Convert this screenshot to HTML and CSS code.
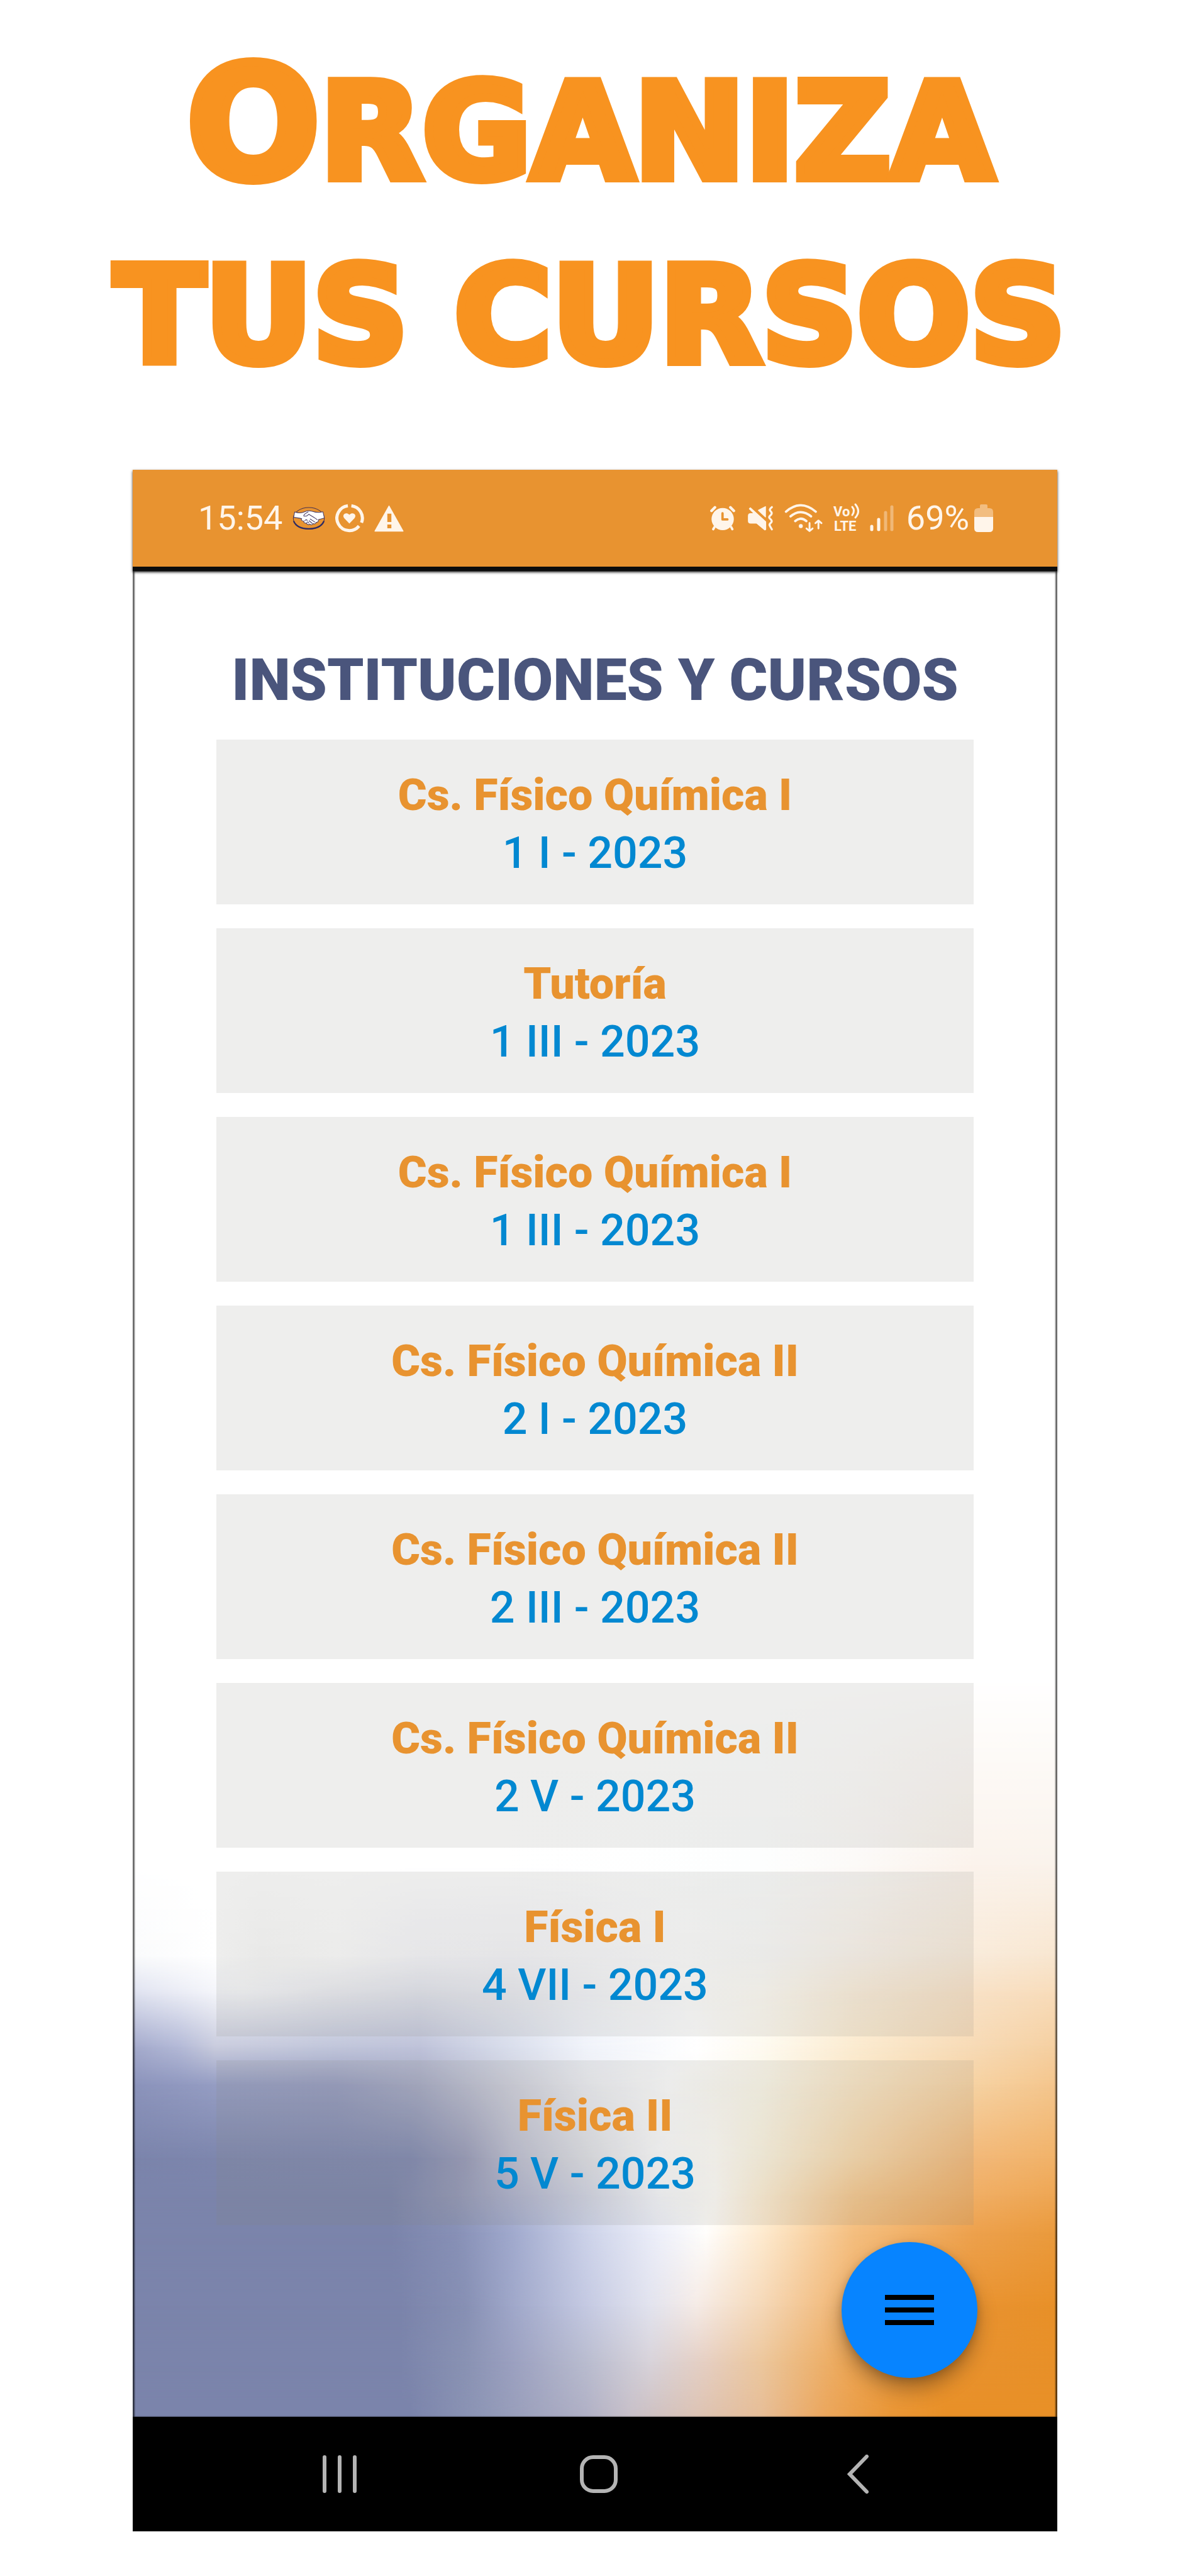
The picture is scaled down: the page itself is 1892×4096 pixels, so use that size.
FILE: index.html
```html
<!DOCTYPE html>
<html lang="es">
<head>
<meta charset="utf-8">
<meta name="viewport" content="width=device-width, initial-scale=1">
<title>Organiza tus cursos</title>
<link rel="stylesheet" href="styles.css">
</head>
<body>
<h1 class="headline">
  <span class="headline-line headline-lead">ORGANIZA</span>
  <span class="headline-line">TUS CURSOS</span>
</h1>

<div class="phone">
  <header class="status">
    <div class="status-group">
      <span class="status-text">15:54</span>
      <svg width="52" height="37" viewBox="46 50 192 138" aria-hidden="true">
        <ellipse cx="142" cy="118" rx="92" ry="64" fill="none" stroke="#4a3350" stroke-width="4"/>
        <path d="M52 134C66 168 104 180 142 180s76-12 90-46" fill="none" stroke="#2d2a63" stroke-width="8"/>
        <path d="M58 80c22 8 42 8 62-2 12-6 30-5 46-1 22 8 40 7 60 2l8 36c-12 4-22 7-34 10 0 12-6 18-14 16-3 9-10 12-18 8-5 9-14 9-20 3-8 6-17 2-20-6-10 2-17-4-16-12-12 0-18-8-12-14-14-4-28-6-48-8z" fill="#fff" stroke="#4a3f68" stroke-width="4" stroke-linejoin="round"/>
        <path d="M112 104c-2-10 14-18 26-24M112 104c12 4 22-2 30-10 16 10 34 18 50 32M150 122l28 18M144 132l18 16M118 132c6-8 14-8 14 0M130 144c4-6 12-6 12 2" fill="none" stroke="#4a3f68" stroke-width="4" stroke-linecap="round"/>
      </svg>
      <svg width="46" height="46" viewBox="294 36 174 172" aria-hidden="true">
        <g fill="none" stroke="#fff5ea" stroke-width="19">
          <path d="M370 47A75 75 0 1 0 437 169"/>
          <path d="M391 47A75 75 0 0 1 452 149"/>
        </g>
        <path d="M379 154l-30-31c-18-22 8-42 30-22 22-20 48 0 30 22z" fill="#fff5ea"/>
      </svg>
      <svg width="47" height="43" viewBox="528 38 176 158" aria-hidden="true">
        <path d="M616 42l84 150H532z" fill="#fff5ea" stroke="#fff5ea" stroke-width="5" stroke-linejoin="round"/>
        <path d="M606 88h24v50h-24zM606 153h24v22h-24z" fill="#e89330"/>
      </svg>
    </div>
    <div class="status-group">
      <svg width="44" height="40" viewBox="25 49 164 148" aria-hidden="true">
        <circle cx="107" cy="128" r="66" fill="#fff5ea"/>
        <g fill="none" stroke="#fff5ea" stroke-linecap="round">
          <path d="M41 79l20-20M153 59l20 20" stroke-width="16"/>
          <path d="M58 176l-7 12M158 176l6 12" stroke-width="14"/>
        </g>
        <path d="M106 94v36h29" fill="none" stroke="#e89330" stroke-width="14" stroke-linecap="round" stroke-linejoin="round"/>
      </svg>
      <svg width="44" height="40" viewBox="254 49 164 148" aria-hidden="true">
        <path d="M366 54v62l-42-40z" fill="#fff5ea" stroke="#fff5ea" stroke-width="5" stroke-linejoin="round"/>
        <path d="M276 63l90 82v44l-4 2-48-40h-36q-12 0-12-12v-30q0-12 12-12h24l-30-30z" fill="#fff5ea" stroke="#fff5ea" stroke-width="8" stroke-linejoin="round"/>
        <path d="M404 57l-9 9q-6 7 0 14l5 6q6 8 0 15l-9 9q-6 7 0 14l9 9q6 7 0 15l-7 7q-6 8 0 15l11 19" fill="none" stroke="#fff5ea" stroke-width="12" stroke-linecap="round"/>
      </svg>
      <svg width="62" height="46" viewBox="482 35 230 172" aria-hidden="true">
        <g fill="none" stroke="#fff5ea" stroke-width="14" stroke-linecap="round" stroke-linejoin="round">
          <path d="M491 82Q535 44 579 44T668 82"/>
          <path d="M518 110q61-50 122 0"/>
          <path d="M546 138q33-28 66 0"/>
          <path d="M631 150v46M613 182l18 15 18-15M684 182v-46M666 150l18-15 18 15" stroke-width="11"/>
        </g>
        <circle cx="579" cy="168" r="12" fill="#fff5ea"/>
      </svg>
      <svg class="volte" width="42" height="54" viewBox="0 0 42 54" aria-hidden="true">
        <text x="0" y="24">Vo</text>
        <text x="1" y="47">LTE</text>
        <path d="M30 9q5 6 0 13M35 5q9 11 0 21" fill="none" stroke="#fff5ea" stroke-width="3" stroke-linecap="round"/>
      </svg>
      <svg width="42" height="42" viewBox="0 0 42 42" aria-hidden="true">
        <g stroke="#fff5ea" stroke-width="5" stroke-linecap="round">
          <path d="M3 34v5M14 23v16"/>
          <path d="M25 12v27M35 3v36" opacity=".38"/>
        </g>
      </svg>
      <div class="battery">
        <span class="status-text">69%</span>
        <svg width="30" height="46" viewBox="0 0 30 46" aria-hidden="true">
          <path d="M9 3q0-2 2-2h8q2 0 2 2v4h3q6 0 6 6v8H0v-8q0-6 6-6h3z" fill="#f2bd80"/>
          <path d="M0 21h30v18q0 6-6 6H6q-6 0-6-6z" fill="#fff5ea"/>
        </svg>
      </div>
    </div>
  </header>

  <main class="screen">
    <div class="backdrop" aria-hidden="true">
      <div class="wash wash-1"></div>
      <div class="wash wash-2"></div>
      <div class="wash wash-3"></div>
      <div class="wash wash-4"></div>
      <div class="wash wash-5"></div>
      <div class="wash wash-6"></div>
      <div class="wash wash-7"></div>
      <div class="wash wash-8"></div>
      <div class="wash wash-9"></div>
      <div class="wash wash-10"></div>
      <div class="wash wash-11"></div>
    </div>
    <h2 class="title">INSTITUCIONES Y CURSOS</h2>
    <ul class="courses">
      <li><a class="course" href="#"><strong class="course-name">Cs. Físico Química I</strong><span class="course-term">1 I - 2023</span></a></li>
      <li><a class="course" href="#"><strong class="course-name">Tutoría</strong><span class="course-term">1 III - 2023</span></a></li>
      <li><a class="course" href="#"><strong class="course-name">Cs. Físico Química I</strong><span class="course-term">1 III - 2023</span></a></li>
      <li><a class="course" href="#"><strong class="course-name">Cs. Físico Química II</strong><span class="course-term">2 I - 2023</span></a></li>
      <li><a class="course" href="#"><strong class="course-name">Cs. Físico Química II</strong><span class="course-term">2 III - 2023</span></a></li>
      <li><a class="course" href="#"><strong class="course-name">Cs. Físico Química II</strong><span class="course-term">2 V - 2023</span></a></li>
      <li><a class="course" href="#"><strong class="course-name">Física I</strong><span class="course-term">4 VII - 2023</span></a></li>
      <li><a class="course" href="#"><strong class="course-name">Física II</strong><span class="course-term">5 V - 2023</span></a></li>
    </ul>
    <button class="fab" type="button" aria-label="Menú">
      <svg width="78" height="48" viewBox="0 0 78 48" aria-hidden="true">
        <path d="M0 0h78v8H0zM0 20h78v8H0zM0 40h78v8H0z"/>
      </svg>
    </button>
  </main>

  <nav class="softkeys" aria-label="Sistema">
    <button class="softkey" type="button" aria-label="Recientes">
      <svg width="56" height="60" viewBox="0 0 56 60" aria-hidden="true"><path d="M4 3v54M28 3v54M52 3v54"/></svg>
    </button>
    <button class="softkey" type="button" aria-label="Inicio">
      <svg width="60" height="60" viewBox="0 0 60 60" aria-hidden="true"><rect x="3" y="3" width="54" height="54" rx="18"/></svg>
    </button>
    <button class="softkey" type="button" aria-label="Atrás">
      <svg width="34" height="62" viewBox="0 0 34 62" aria-hidden="true"><path d="M31 3L4 31l27 28"/></svg>
    </button>
  </nav>
</div>
</body>
</html>
```
FILE: styles.css
```css
* {
  box-sizing: border-box;
}

body {
  margin: 0;
  padding: 64px 0 71px;
  background: #fff;
  font-family: Roboto, "Liberation Sans", sans-serif;
}

.headline {
  margin: 0 0 99px;
  padding-right: 16px;
  color: #f89320;
  font: 700 211px/292px "DejaVu Sans", sans-serif;
  text-align: center;
  -webkit-text-stroke: 14px #f89320;
}

.headline-line {
  display: block;
}

.headline-lead::first-letter {
  font-size: 250px;
  line-height: 1;
}

.phone {
  width: 77.7%;
  margin: 0 auto;
}

/* Status bar */
.status {
  position: relative;
  z-index: 1;
  display: flex;
  align-items: center;
  justify-content: space-between;
  height: 161px;
  padding: 0 102px 0 104px;
  border-bottom: 7px solid #0c0c0c;
  background: #e89330;
  box-shadow: 0 2px 4px rgba(0, 0, 0, .8);
  color: #fff5ea;
}

.status-group {
  display: flex;
  align-items: center;
  gap: 16px;
}

.battery {
  display: flex;
  align-items: center;
  gap: 8px;
}

.status-text {
  font-size: 54px;
  line-height: 64px;
}

.volte {
  overflow: visible;
  fill: #fff5ea;
  font: 700 22px Roboto, sans-serif;
}

/* App screen */
.screen {
  position: relative;
  padding: 119px 9% 305px;
}

.title {
  margin: 0 0 40px;
  color: #4a557c;
  font-size: 93px;
  font-weight: 900;
  line-height: 109px;
  text-align: center;
  white-space: nowrap;
}

.courses {
  display: grid;
  gap: 38px;
  margin: 0;
  padding: 0 1px;
  list-style: none;
}

.course {
  display: flex;
  flex-direction: column;
  align-items: center;
  padding: 42px 0 36px;
  background: rgba(132, 132, 130, .14);
  font-size: 70px;
  line-height: 92px;
  text-decoration: none;
}

.course-name {
  color: #e89330;
  font-weight: 900;
}

.course-term {
  color: #0288d1;
  font-weight: 500;
}

.fab {
  position: absolute;
  right: 127px;
  bottom: 62px;
  display: grid;
  place-items: center;
  width: 216px;
  height: 216px;
  padding: 0;
  border: 0;
  border-radius: 50%;
  background: #0784ff;
  box-shadow: 0 18px 30px rgba(60, 40, 20, .4), 0 4px 12px rgba(60, 40, 20, .2);
}

/* Android navigation keys */
.softkeys {
  display: grid;
  grid-template-columns: repeat(3, 1fr);
  height: 182px;
  padding: 0 111px 0 123px;
  background: #000;
}

.softkey {
  display: grid;
  place-items: center;
  padding: 0;
  border: 0;
  background: none;
}

.softkey svg {
  fill: none;
  stroke: #b4b4b4;
  stroke-width: 6;
  stroke-linecap: round;
}

/* Colour wash: each band fades in over the one above it */
.backdrop,
.backdrop::after,
.wash {
  position: absolute;
  inset: 0;
}

.backdrop {
  z-index: -1;
  overflow: hidden;
  background: #fff;
}

.backdrop::after {
  content: "";
  box-shadow: inset 3px 0 2px rgba(0, 0, 0, .6), inset -3px 0 2px rgba(0, 0, 0, .6);
}

.wash-1 {
  background: linear-gradient(90deg, #fff 40%, #fdfefe 68%, #fcfaf8 78%, #fbf3ec 91%, #faf3ec);
  mask-image: linear-gradient(transparent 60%, #000 70%);
}

.wash-2 {
  background: linear-gradient(90deg, #fafbfc, #fff 9%, #fafafa 14%, #fdfdfd 22%, #f6f6fa 31%, #f5f5f9 41%, #f8f8fb 49%, #fdfdfd 60%, #fbfbfa 68%, #fbf4ec 78%, #f9ebda 91%, #f8e6d0);
  mask-image: linear-gradient(transparent 70%, #000 75%);
}

.wash-3 {
  background: linear-gradient(90deg, #dfe2f0, #f4f5fa 9%, #f5f6f9 12%, #eaebf1 22%, #e1e3ec 31%, #e9eaf0 41%, #f3f4f8 49%, #fdfdfd 60%, #fefcf5 68%, #fbeedb 78%, #f8e1c6 91%, #f8dcba);
  mask-image: linear-gradient(transparent 75%, #000 77%);
}

.wash-4 {
  background: linear-gradient(90deg, #a3a9cb, #b2b8d6 5%, #c8cbdd 9%, #c0c5da 22%, #bec2d9 31%, #d9deec 41%, #f0f3fa 49%, #fff 61%, #fefaf0 68%, #fbebd0 78%, #f7dab5 91%, #f5cfa0);
  mask-image: linear-gradient(transparent 77%, #000 80%);
}

.wash-5 {
  background: linear-gradient(90deg, #8b93bb, #959dc3 9%, #969cbf 22%, #a6aac4 31%, #cfd0dc 41%, #ecedf2 49%, #fdfdfd 58%, #fcf8ea 68%, #fae6c6 78%, #f6d2a2 91%, #f4c58c);
  mask-image: linear-gradient(transparent 80%, #000 82%);
}

.wash-6 {
  background: linear-gradient(90deg, #7b84ab, #7d86ad 9%, #7f88af 30%, #979ab8 36%, #bbbdd0 41%, #dddee4 49%, #fafafb 57%, #fffdf7 63%, #fcf4e0 68%, #f8d9ac 78%, #f2b878 91%, #f1b268);
  mask-image: linear-gradient(transparent 82%, #000 86%);
}

.wash-7 {
  background: linear-gradient(90deg, #7b84ab 28%, #9196b5 35%, #adb1cc 41%, #d0d3e2 49%, #f5f6fa 57%, #fffdf8 63%, #fdeed4 68%, #f5c88f 78%, #f0ae64 91%, #eea653);
  mask-image: linear-gradient(transparent 86%, #000 88%);
}

.wash-8 {
  background: linear-gradient(90deg, #7b84ab 28%, #8790b6 35%, #a0a9cd 41%, #ccd2e9 49%, #eef0fa 57%, #fffefc 62%, #feebd0 68%, #f4be7f 78%, #eda14d 91%, #ea9a3c);
  mask-image: linear-gradient(transparent 88%, #000 90%);
}

.wash-9 {
  background: linear-gradient(90deg, #7b84ab 29%, #8790b4 36%, #9fa7c9 41%, #c4c9e2 49%, #e2e3ee 56%, #f5ebe6 61%, #f5d8b8 68%, #f0b068 78%, #e99434 88%, #e89028);
  mask-image: linear-gradient(transparent 90%, #000 94%);
}

.wash-10 {
  background: linear-gradient(90deg, #7b84ab 29%, #8992b3 36%, #9ba0c0 41%, #b9bccf 49%, #d8d3da 56%, #e6cfc2 62%, #ecc79d 68%, #eda552 78%, #e89230 86%, #e89028);
  mask-image: linear-gradient(transparent 94%, #000 97%);
}

.wash-11 {
  background: linear-gradient(90deg, #7b84ab 30%, #8f97b6 38%, #b0b0c5 49%, #c8c0c8 54%, #dcc3b4 61%, #e6bd97 68%, #eba65c 75%, #e99636 82%, #e89027 88%);
  mask-image: linear-gradient(transparent 97%, #000);
}
```
